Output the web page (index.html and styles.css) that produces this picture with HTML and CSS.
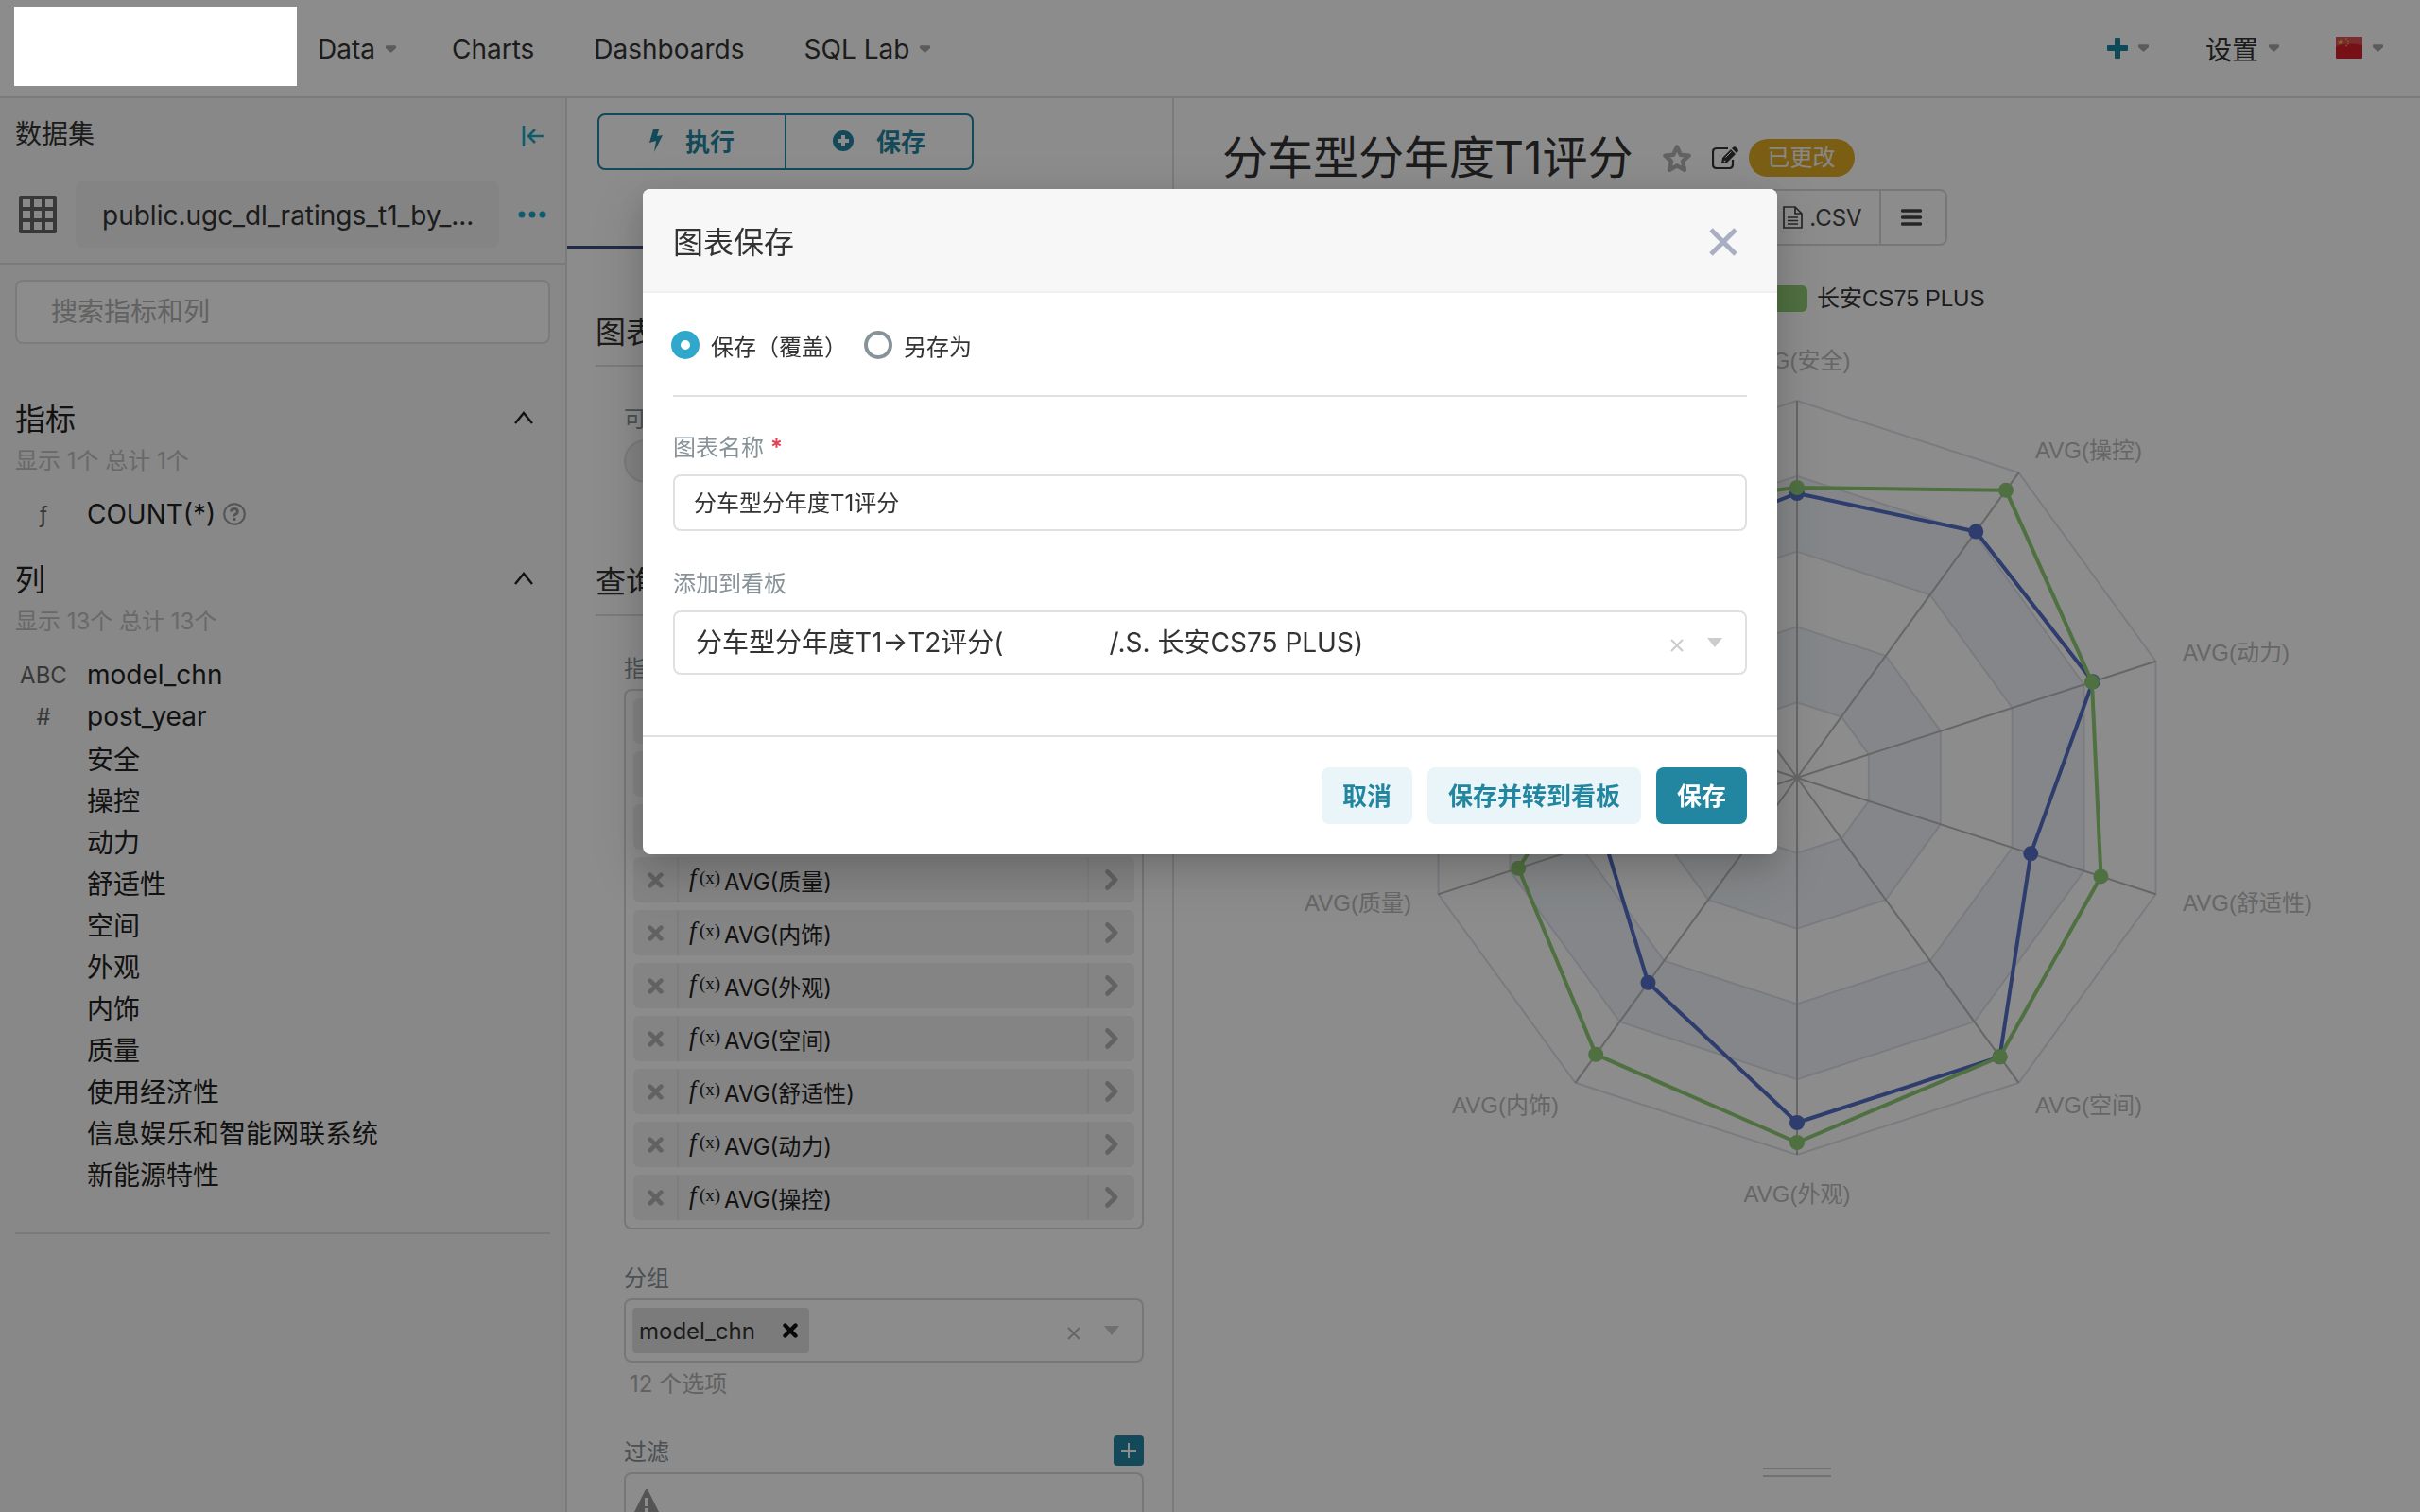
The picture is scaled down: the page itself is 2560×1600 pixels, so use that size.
FILE: index.html
```html
<!DOCTYPE html>
<html lang="zh-CN">
<head>
<meta charset="utf-8">
<title>分车型分年度T1评分</title>
<link rel="stylesheet" href="styles.css">
</head>
<body>
<svg class="defs" aria-hidden="true">
  <symbol id="caret" viewBox="0 0 12 8"><path d="M1 0h10q1 0 1 1v2L7 7.500q-1 .8-2 0L0 3V1q0-1 1-1z" fill="currentColor"/></symbol>
  <symbol id="times" viewBox="0 0 16 16"><path d="M2.500 2.500l11 11M13.500 2.500l-11 11" fill="none" stroke="currentColor" stroke-width="4.400" stroke-linecap="round"/></symbol>
  <symbol id="thin-times" viewBox="0 0 14 14"><path d="M1 1l12 12M13 1L1 13" fill="none" stroke="currentColor" stroke-width="2.200"/></symbol>
  <symbol id="triangle" viewBox="0 0 16 10"><path d="M0 0h16L8 10z" fill="currentColor"/></symbol>
  <symbol id="right" viewBox="0 0 14 22"><path d="M2.500 2.500L11 11l-8.500 8.500" fill="none" stroke="currentColor" stroke-width="4.600" stroke-linecap="round" stroke-linejoin="round"/></symbol>
  <symbol id="up" viewBox="0 0 20 14"><path d="M1 13L10 2l9 11" fill="none" stroke="currentColor" stroke-width="2.400"/></symbol>
</svg>

<header class="nav">
  <div class="logo"></div>
  <nav class="nav-links">
    <a href="#" class="drop">Data<svg class="caret"><use href="#caret"/></svg></a>
    <a href="#">Charts</a>
    <a href="#">Dashboards</a>
    <a href="#" class="drop">SQL Lab<svg class="caret"><use href="#caret"/></svg></a>
  </nav>
  <div class="nav-tools">
    <a href="#" class="drop" aria-label="新建"><svg class="plus" viewBox="0 0 22 22"><path d="M9 0h4q1 0 1 1v7h7q1 0 1 1v4q0 1-1 1h-7v7q0 1-1 1H9q-1 0-1-1v-7H1q-1 0-1-1V9q0-1 1-1h7V1q0-1 1-1z" fill="currentColor"/></svg><svg class="caret"><use href="#caret"/></svg></a>
    <a href="#" class="drop">设置<svg class="caret"><use href="#caret"/></svg></a>
    <a href="#" class="drop" aria-label="语言"><svg class="flag" viewBox="0 0 28 24"><rect width="28" height="23" rx="1" fill="#d81f2a"/><path d="M0 1q0-1 1-1h26q1 0 1 1v8Q14 5 0 10z" fill="#e0505a"/><path d="M5 2l1 2.500h2.500L6.500 6l.8 2.500L5 7 2.800 8.500 3.500 6l-2-1.500H4z" fill="#f2c23a"/><g fill="#e5a03a"><circle cx="11" cy="2" r="1"/><circle cx="13" cy="4.500" r="1"/><circle cx="13" cy="7.500" r="1"/><circle cx="11" cy="9.500" r="1"/></g></svg><svg class="caret"><use href="#caret"/></svg></a>
  </div>
</header>

<main class="workspace">
  <aside class="sidebar">
    <div class="side-head">
      <span>数据集</span>
      <button class="icon-btn fold" aria-label="折叠"><svg width="24" height="22" viewBox="0 0 24 22"><path d="M2 0v22M23 11H8M14 4l-7 7 7 7" fill="none" stroke="currentColor" stroke-width="2.600"/></svg></button>
    </div>
    <div class="dataset">
      <svg class="grid-icon" viewBox="0 0 40 40"><path fill-rule="evenodd" fill="currentColor" d="M2 0h36q2 0 2 2v36q0 2-2 2H2q-2 0-2-2V2q0-2 2-2zM4 4v8h8V4zM16 4v8h8V4zM28 4v8h8V4zM4 16v8h8v-8zM16 16v8h8v-8zM28 16v8h8v-8zM4 28v8h8v-8zM16 28v8h8v-8zM28 28v8h8v-8z"/></svg>
      <span class="dataset-name">public.ugc_dl_ratings_t1_by_...</span>
      <button class="icon-btn" aria-label="更多"><svg width="30" height="8" viewBox="0 0 30 8" fill="currentColor"><circle cx="4" cy="4" r="3.500"/><circle cx="15" cy="4" r="3.500"/><circle cx="26" cy="4" r="3.500"/></svg></button>
    </div>
    <div class="side-body">
      <input class="search" type="text" placeholder="搜索指标和列" aria-label="搜索指标和列">
      <section class="group first">
        <h2>指标<svg class="up"><use href="#up"/></svg></h2>
        <p>显示 1个 总计 1个</p>
        <ul>
          <li><span class="type">ƒ</span>COUNT(*)<svg class="help" viewBox="0 0 24 24"><circle cx="12" cy="12" r="10.800" fill="none" stroke="currentColor" stroke-width="2"/><path d="M8.500 9.500Q8.700 6.500 12 6.500t3.400 2.800Q15.400 11 13.500 12T12 14.500" fill="none" stroke="currentColor" stroke-width="3"/><rect x="10.500" y="16" width="3" height="3" fill="currentColor"/></svg></li>
        </ul>
      </section>
      <section class="group">
        <h2>列<svg class="up"><use href="#up"/></svg></h2>
        <p>显示 13个 总计 13个</p>
        <ul>
          <li><span class="type">ABC</span>model_chn</li>
          <li><span class="type">#</span>post_year</li>
          <li><span class="type"></span>安全</li>
          <li><span class="type"></span>操控</li>
          <li><span class="type"></span>动力</li>
          <li><span class="type"></span>舒适性</li>
          <li><span class="type"></span>空间</li>
          <li><span class="type"></span>外观</li>
          <li><span class="type"></span>内饰</li>
          <li><span class="type"></span>质量</li>
          <li><span class="type"></span>使用经济性</li>
          <li><span class="type"></span>信息娱乐和智能网联系统</li>
          <li><span class="type"></span>新能源特性</li>
        </ul>
      </section>
    </div>
  </aside>

  <section class="controls">
    <div class="run-group">
      <button><svg width="14" height="24" viewBox="0 0 14 24"><path d="M4 0h6L8 7l6-1L5 24l2-12-7 2z" fill="currentColor"/></svg>执行</button>
      <button><svg width="22" height="22" viewBox="0 0 22 22"><path fill-rule="evenodd" fill="currentColor" d="M11 0a11 11 0 100 22 11 11 0 000-22zM9 5h4v4h4v4h-4v4H9v-4H5V9h4z"/></svg>保存</button>
    </div>
    <div class="tabs"><span class="ink"></span></div>
    <div class="panel">
      <h3>图表</h3>
      <div class="panel-body">
        <div class="label">可视化类型</div>
        <div class="viz-pill"></div>
      </div>
      <h3>查询</h3>
      <div class="panel-body">
        <div class="label">指标</div>
        <ul class="metrics">
          <li></li>
          <li></li>
          <li></li>
          <li><button aria-label="移除"><svg><use href="#times"/></svg></button><span class="metric"><span class="fx"><i>f</i>(x)</span>AVG(质量)</span><svg class="go"><use href="#right"/></svg></li>
          <li><button aria-label="移除"><svg><use href="#times"/></svg></button><span class="metric"><span class="fx"><i>f</i>(x)</span>AVG(内饰)</span><svg class="go"><use href="#right"/></svg></li>
          <li><button aria-label="移除"><svg><use href="#times"/></svg></button><span class="metric"><span class="fx"><i>f</i>(x)</span>AVG(外观)</span><svg class="go"><use href="#right"/></svg></li>
          <li><button aria-label="移除"><svg><use href="#times"/></svg></button><span class="metric"><span class="fx"><i>f</i>(x)</span>AVG(空间)</span><svg class="go"><use href="#right"/></svg></li>
          <li><button aria-label="移除"><svg><use href="#times"/></svg></button><span class="metric"><span class="fx"><i>f</i>(x)</span>AVG(舒适性)</span><svg class="go"><use href="#right"/></svg></li>
          <li><button aria-label="移除"><svg><use href="#times"/></svg></button><span class="metric"><span class="fx"><i>f</i>(x)</span>AVG(动力)</span><svg class="go"><use href="#right"/></svg></li>
          <li><button aria-label="移除"><svg><use href="#times"/></svg></button><span class="metric"><span class="fx"><i>f</i>(x)</span>AVG(操控)</span><svg class="go"><use href="#right"/></svg></li>
        </ul>
        <div class="label spaced">分组</div>
        <div class="select-box">
          <span class="tag">model_chn<button aria-label="移除"><svg><use href="#times"/></svg></button></span>
          <button class="clear" aria-label="清除"><svg><use href="#thin-times"/></svg></button>
          <svg class="arrow"><use href="#triangle"/></svg>
        </div>
        <div class="hint">12 个选项</div>
        <div class="label filter-head">过滤<button aria-label="添加过滤"><svg width="16" height="16" viewBox="0 0 16 16"><path d="M8 0v16M0 8h16" stroke="currentColor" stroke-width="2"/></svg></button></div>
        <div class="filter-box"><svg width="28" height="28" viewBox="0 0 28 28"><path fill-rule="evenodd" fill="currentColor" d="M12.500 1q1.500-2 3 0l12 24q1 3-2 3h-23q-3 0-2-3zM12 9v9h4V9zM12 20v4h4v-4z"/></svg></div>
      </div>
    </div>
  </section>

  <section class="chart">
    <div class="title-row">
      <h1>分车型分年度T1评分</h1>
      <svg class="star" viewBox="0 0 32 31"><path d="M16 3.500l3.700 8.200 8.900 1-6.600 6 1.900 9.100L16 23.300l-7.900 4.500L10 18.700l-6.600-6 8.900-1z" fill="none" stroke="currentColor" stroke-width="4.400" stroke-linejoin="round"/></svg>
      <svg class="edit" viewBox="0 0 28 24"><path d="M22 14v5q0 4-4 4H5q-4 0-4-4V6q0-4 4-4h12" fill="none" stroke="currentColor" stroke-width="2.200"/><path fill-rule="evenodd" d="M10 18l1-6L20 3l5 5-9 9zM12.500 15.500l1-1 1 1-1 1z" fill="currentColor"/><path d="M22 1q2-1.500 3.500 0l1.500 1.500q1.500 1.500 0 3.500l-1 1-5-5z" fill="currentColor"/><path d="M14.500 11.500l6-6" stroke="#fff" stroke-width="1"/></svg>
      <span class="badge">已更改</span>
    </div>
    <div class="export-row">
      <div class="export">
        <button class="csv"><svg width="21" height="24" viewBox="0 0 21 24"><path d="M1 1h12l7 7v15H1zM13 1v7h7M5 12h11M5 15.500h11M5 19h11" fill="none" stroke="currentColor" stroke-width="1.700"/></svg>.CSV</button>
        <button class="menu" aria-label="菜单"><svg width="22" height="18" viewBox="0 0 22 18"><path d="M1.500 2h19M1.500 9h19M1.500 16h19" stroke="currentColor" stroke-width="3.400" stroke-linecap="round"/></svg></button>
      </div>
    </div>
    <svg class="radar" viewBox="0 0 1318 1270">
      <g transform="translate(659 43)">
        <rect x="-39" y="-11" width="50" height="28" rx="6" fill="#91cc75"/>
        <text x="21" y="11" fill="#333">长安CS75 PLUS</text>
      </g>
      <g transform="translate(659 553)" id="plot">
        <g fill="#bbb">
          <text x="0" y="-433" text-anchor="middle">AVG(安全)</text>
          <text x="252" y="-338">AVG(操控)</text>
          <text x="408" y="-124">AVG(动力)</text>
          <text x="408" y="141">AVG(舒适性)</text>
          <text x="252" y="355">AVG(空间)</text>
          <text x="0" y="449" text-anchor="middle">AVG(外观)</text>
          <text x="-252" y="355" text-anchor="end">AVG(内饰)</text>
          <text x="-408" y="141" text-anchor="end">AVG(质量)</text>
        </g>
      </g>
    </svg>
    <div class="handle"></div>
  </section>
</main>

<div class="mask"></div>
<div class="modal" role="dialog" aria-labelledby="dlg-title">
  <div class="modal-head">
    <h2 id="dlg-title">图表保存</h2>
    <button class="icon-btn close" aria-label="关闭"><svg width="30" height="30" viewBox="0 0 30 30"><path d="M2 2l26 26M28 2L2 28" stroke="currentColor" stroke-width="5"/></svg></button>
  </div>
  <form class="modal-body">
    <div class="radios">
      <label><input type="radio" name="mode" checked>保存（覆盖）</label>
      <label><input type="radio" name="mode">另存为</label>
    </div>
    <label class="label" for="chart-name">图表名称 <b class="req">*</b></label>
    <input class="text" id="chart-name" type="text" value="分车型分年度T1评分">
    <label class="label second" for="board">添加到看板</label>
    <div class="board">
      <select id="board"><option>分车型分年度T1→T2评分(&emsp;&emsp;&emsp;&emsp;/.S. 长安CS75 PLUS)</option></select>
      <button class="clear" type="button" aria-label="清除"><svg><use href="#thin-times"/></svg></button>
      <svg class="arrow"><use href="#triangle"/></svg>
    </div>
  </form>
  <div class="modal-foot">
    <button>取消</button>
    <button>保存并转到看板</button>
    <button class="primary">保存</button>
  </div>
</div>
<script src="radar.js"></script>
</body>
</html>
```
FILE: styles.css
```css
* { box-sizing: border-box; }
body {
  margin: 0;
  height: 100vh;
  overflow: hidden;
  display: flex;
  flex-direction: column;
  background: #fff;
  color: #333;
  font-family: Inter, "Noto Sans CJK SC", sans-serif;
  font-size: 28px;
}
h1, h2, h3, p, ul { margin: 0; padding: 0; font-weight: 400; }
ul { list-style: none; }
a { color: inherit; text-decoration: none; }
button, input, select { font: inherit; color: inherit; margin: 0; }
button { border: 0; background: none; padding: 0; display: flex; align-items: center; justify-content: center; }
svg { display: block; flex: none; }
.defs { position: absolute; width: 0; height: 0; }
.icon-btn { color: #20a7c9; }

/* top navigation */
.nav { flex: none; display: flex; height: 104px; border-bottom: 2px solid #e0e0e0; padding-right: 39px; }
.logo { position: relative; z-index: 20; width: 299px; height: 84px; margin: 7px 22px 0 15px; background: #fff; }
.nav-links, .nav-tools { display: flex; align-items: center; gap: 64px; padding-top: 2px; }
.nav-links { gap: 63px; }
.nav-tools { margin-left: auto; gap: 60px; padding-top: 0; }
.drop { display: flex; align-items: center; gap: 11px; }
.nav-links .drop { margin-right: -4px; }
.caret { width: 11px; height: 8px; color: #a6a6a6; }
.plus { width: 22px; height: 22px; color: #1a85a0; }
.flag { width: 28px; height: 24px; }

.workspace { flex: 1; min-height: 0; display: grid; grid-template-columns: 600px 642px 1fr; }

/* dataset sidebar */
.sidebar { background: #f7f7f7; border-right: 2px solid #e0e0e0; padding-top: 8px; }
.side-head { display: flex; justify-content: space-between; align-items: center; height: 56px; padding: 0 22px 0 16px; }
.fold { padding-top: 8px; }
.dataset { display: flex; align-items: center; gap: 20px; margin-top: 24px; padding: 0 20px 16px; border-bottom: 2px solid #e0e0e0; }
.grid-icon { width: 40px; height: 40px; color: #666; }
.dataset-name { flex: 1; height: 70px; line-height: 72px; padding-left: 28px; border-radius: 8px; background: #f0f0f0; white-space: nowrap; overflow: hidden; }
.side-body { padding: 16px 16px 0; }
.search { display: block; width: 100%; height: 68px; padding: 0 36px; border: 2px solid #e0e0e0; border-radius: 8px; background: #fff; }
.search::placeholder { color: #b2b2b2; opacity: 1; }
.group { color: #222; }
.group h2 { display: flex; justify-content: space-between; align-items: center; font-size: 32px; line-height: 48px; margin-top: 24px; padding-right: 18px; }
.group.first h2 { margin-top: 56px; }
.group p { font-size: 24px; line-height: 40px; color: #bfbfbf; margin-bottom: 14px; }
.group:last-child ul { border-bottom: 2px solid #e0e0e0; padding-bottom: 40px; }
.up { width: 20px; height: 14px; margin-bottom: 4px; }
.group li { display: flex; align-items: center; height: 44px; }
.type { width: 60px; margin-right: 16px; text-align: center; font-size: 24px; color: #666; }
.help { width: 24px; height: 24px; margin-left: 8px; color: #999; }

/* control panel */
.controls { border-right: 2px solid #e0e0e0; padding-top: 16px; overflow: hidden; }
.run-group { display: flex; width: 398px; height: 60px; margin-left: 32px; border: 2px solid #2386a0; border-radius: 8px; color: #2386a0; font-size: 26px; font-weight: 600; }
.run-group button { flex: 1; gap: 24px; padding-bottom: 3px; }
.run-group button + button { border-left: 2px solid #2386a0; }
.tabs { height: 84px; display: flex; align-items: flex-end; }
.ink { width: 320px; height: 4px; background: #444e7c; }
.panel { padding: 0 30px; }
.panel h3 { margin-top: 64px; padding-bottom: 10px; font-size: 32px; line-height: 48px; border-bottom: 2px solid #e0e0e0; }
.panel-body + h3 { margin-top: 81px; }
.panel-body { padding: 38px 0 0 30px; }
.label { display: block; font-size: 24px; line-height: 36px; margin-bottom: 3px; color: #879399; }
.viz-pill { height: 46px; border: 2px solid #e0e0e0; border-radius: 23px; background: #f0f0f0; }
.metrics { display: flex; flex-direction: column; gap: 8px; padding: 8px; border: 2px solid #d9d9d9; border-radius: 8px; }
.metrics li { display: grid; grid-template-columns: 48px 1fr 50px; height: 48px; border-radius: 6px; background: #f0f0f0; font-size: 24px; color: #222; }
.metrics li button { color: #b2b2b2; border-right: 2px solid #e6e6e6; }
.metrics li button svg { width: 17px; height: 17px; }
.metric { display: flex; align-items: center; padding-left: 8px; }
.fx { display: flex; align-items: center; width: 40px; height: 40px; margin-bottom: 4px; font-family: "Liberation Serif", serif; font-size: 19px; color: #222; }
.fx i { width: 14px; font-size: 27px; text-indent: 3px; }
.go { width: 48px; height: 22px; align-self: center; margin-left: 2px; color: #b2b2b2; }
.metrics li:nth-child(n+4) { background: linear-gradient(#e6e6e6, #e6e6e6) right 48px top / 2px 100% no-repeat #f0f0f0; }
.spaced { margin-top: 34px; }
.select-box { display: flex; align-items: center; height: 68px; padding: 0 24px 0 7px; border: 2px solid #d9d9d9; border-radius: 8px; font-size: 24px; }
.tag { display: flex; align-items: center; justify-content: space-between; width: 187px; height: 48px; padding: 0 12px 0 7px; border-radius: 4px; background: #e0e0e0; }
.tag svg { width: 16px; height: 16px; color: #111; }
.clear { margin-left: auto; padding-top: 5px; color: #ccc; }
.clear svg { width: 14px; height: 14px; }
.select-box .clear { color: #bbb; }
.arrow { width: 16px; height: 10px; margin-left: 25px; color: #ccc; }
.hint { margin-top: 5px; padding-left: 6px; font-size: 24px; line-height: 36px; color: #b2b2b2; }
.filter-head { display: flex; justify-content: space-between; margin-top: 36px; }
.filter-head button { width: 32px; height: 32px; border-radius: 4px; background: #2386a0; color: #fff; }
.filter-box { height: 68px; padding: 16px 8px; border: 2px solid #d9d9d9; border-radius: 8px; color: #999; }

/* chart */
.chart { display: flex; flex-direction: column; padding-top: 33px; min-width: 0; }
.title-row { flex: none; display: flex; align-items: center; height: 60px; padding-left: 51px; }
.title-row h1 { font-size: 48px; line-height: 60px; margin-right: 30px; }
.star { width: 32px; height: 31px; color: #b2b2b2; }
.edit { width: 28px; height: 24px; margin-left: 21px; color: #333; }
.badge { height: 40px; line-height: 40px; padding: 0 20px; margin-left: 11px; border-radius: 20px; background: #e0ac26; color: #f7f7f7; font-size: 24px; }
.export-row { flex: none; padding: 3px 0 0 626px; }
.export { display: flex; width: 192px; height: 60px; border: 2px solid #d9d9d9; border-radius: 8px; font-size: 24px; color: #444; }
.csv { flex: 1; gap: 7px; padding-right: 2px; }
.menu { width: 70px; padding-right: 5px; border-left: 2px solid #d9d9d9; }
.radar { width: 100%; height: 1270px; margin-top: 10px; font-family: "Liberation Sans", "Noto Sans CJK SC", sans-serif; font-size: 24px; }
.handle { flex: none; align-self: center; width: 72px; height: 10px; margin-top: 13px; border: solid #d0d0d0; border-width: 2px 0; }

/* save dialog */
.mask { position: fixed; inset: 0; z-index: 10; background: rgba(0, 0, 0, .45); }
.modal {
  position: fixed; z-index: 30; top: 200px; left: 0; right: 0;
  width: 1200px; max-width: 100%; margin: 0 auto;
  background: #fff; border-radius: 8px; overflow: hidden;
  box-shadow: 0 6px 12px -8px rgba(0,0,0,.12), 0 12px 32px rgba(0,0,0,.14), 0 18px 56px 16px rgba(0,0,0,.09);
}
.modal-head { display: flex; justify-content: space-between; align-items: center; height: 110px; padding: 0 42px 0 32px; background: #f7f7f7; border-bottom: 2px solid #f0f0f0; }
.modal-head h2 { font-size: 32px; }
.close { padding-top: 3px; color: #a9afc2; }
.modal-body { padding: 0 32px 64px; }
.radios { display: flex; align-items: center; gap: 18px; height: 110px; padding-top: 2px; margin-bottom: 36px; border-bottom: 2px solid #e0e0e0; font-size: 24px; }
.radios label { display: flex; align-items: center; gap: 12px; }
.radios label:first-child { margin-left: -2px; }
.radios input { appearance: none; width: 30px; height: 30px; border: 4px solid #879399; border-radius: 50%; background: #fff; }
.radios input:checked { border: 10px solid #2fa8cb; }
.modal .label { margin-bottom: 10px; }
.modal .second { margin-top: 38px; }
.req { color: #e04355; }
.text { display: block; width: 100%; height: 60px; padding: 0 20px 3px; border: 2px solid #e0e0e0; border-radius: 8px; font-size: 24px; background: #fff; }
.board { display: flex; align-items: center; height: 68px; padding: 0 24px 0 22px; border: 2px solid #e0e0e0; border-radius: 8px; }
.board select { flex: 1; appearance: none; border: 0; padding: 0; background: none; }
.modal-foot { display: flex; justify-content: flex-end; gap: 16px; padding: 32px; border-top: 2px solid #e0e0e0; font-size: 26px; font-weight: 600; }
.modal-foot button { height: 60px; padding: 0 22px 3px; border-radius: 8px; background: #e9f5f9; color: #2386a0; }
.modal-foot .primary { background: #2386a0; color: #fff; }
```
FILE: radar.js
```js
// Draws the radar grid, spokes and series inside #plot (origin = centre).
const plot = document.getElementById('plot');
const AXES = 10, RADIUS = 399;
const series = [
  { color: '#5470c6', r: [301, 322, 329, 260, 365, 365, 268, 214, 230, 290] },
  { color: '#91cc75', r: [307, 376, 328, 338, 365, 386, 362, 310, 202, 350] }
];
const at = (i, r) => {
  const a = i * 2 * Math.PI / AXES;
  return [r * Math.sin(a), -r * Math.cos(a)];
};
const add = (tag, attrs) => {
  const el = document.createElementNS('http://www.w3.org/2000/svg', tag);
  for (const k in attrs) el.setAttribute(k, attrs[k]);
  plot.appendChild(el);
};
const ring = r => Array.from({ length: AXES }, (_, i) => at(i, r).join(' ')).join(' L') + ' Z';

for (const k of [2, 4]) {
  add('path', {
    d: 'M' + ring(RADIUS * k / 5) + ' M' + ring(RADIUS * (k - 1) / 5),
    fill: '#d2dfea', 'fill-opacity': 0.3, 'fill-rule': 'evenodd'
  });
}
for (let k = 1; k <= 5; k++) {
  add('path', { d: 'M' + ring(RADIUS * k / 5), fill: 'none', stroke: '#dde1ea', 'stroke-width': 2 });
}
for (let i = 0; i < AXES; i++) {
  const [x, y] = at(i, RADIUS);
  add('line', { x1: 0, y1: 0, x2: x, y2: y, stroke: '#bbb', 'stroke-width': 2 });
}
for (const s of series) {
  const pts = s.r.map((r, i) => at(i, r));
  add('polygon', { points: pts.join(' '), fill: 'none', stroke: s.color, 'stroke-width': 4, 'stroke-linejoin': 'bevel' });
  pts.forEach(([cx, cy]) => add('circle', { cx, cy, r: 8, fill: s.color }));
}
```
